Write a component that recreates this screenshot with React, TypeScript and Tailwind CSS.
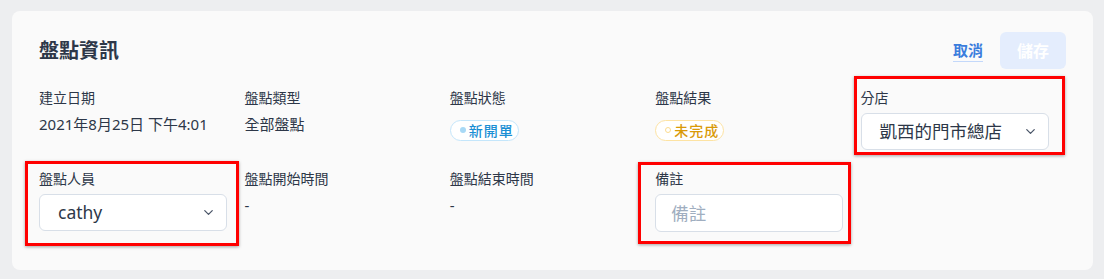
import { ChevronDown } from 'lucide-react';

const font = { fontFamily: '"Noto Sans", "Noto Sans CJK TC", sans-serif' };

const Label = ({ text }: { text: string }) => (
  <div className="text-[14px] leading-5 text-[#2d3748]">{text}</div>
);

const Info = ({ label, value }: { label: string; value: string }) => (
  <div>
    <Label text={label} />
    <div className="mt-[4px] text-[15px] leading-6 text-[#2d3748]">{value}</div>
  </div>
);

const Badge = ({ text, tone }: { text: string; tone: 'blue' | 'amber' }) => {
  const blue = tone === 'blue';
  return (
    <span
      className={
        blue
          ? 'inline-flex h-[21px] items-center gap-[3px] rounded-full border border-[#c4e6fb] bg-white pl-[9px] pr-[4px] text-[14px] font-medium tracking-[1px] text-[#1b8fd4]'
          : 'inline-flex h-[21px] items-center gap-[3px] rounded-full border border-[#fde3a3] bg-white pl-[9px] pr-[4px] text-[14px] font-medium tracking-[1px] text-[#d99a08]'
      }
    >
      {blue ? (
        <span className="h-[6px] w-[6px] rounded-full bg-[#a8d9f6]" />
      ) : (
        <span className="h-[6px] w-[6px] rounded-full border border-[#fcdc8f]" />
      )}
      {text}
    </span>
  );
};

const Select = ({ value }: { value: string }) => (
  <div className="flex h-[37px] w-[188px] items-center justify-between rounded-md border border-[#d8dfe8] bg-white pl-[18px] pr-[10px]">
    <span className="text-[17.5px] text-[#2d3748]">{value}</span>
    <ChevronDown size={15} strokeWidth={2} className="text-[#4a5568]" />
  </div>
);

// red annotation frames drawn over the fields
const Mark = ({ className }: { className: string }) => (
  <div
    className={
      'pointer-events-none absolute border-[3px] border-[#ff0000] shadow-[0_1px_3px_rgba(0,0,0,0.35)] ' + className
    }
  />
);

export default function App() {
  return (
    <div className="h-[279px] bg-[#edeef0] pl-[12px] pr-[11px] pt-[11px]" style={font}>
      <div className="rounded-lg bg-[#fafafa] px-[27px] pb-[38px] pt-[21px]">
        <div className="flex h-[37px] items-center justify-between">
          <h1 className="text-[20px] font-bold text-[#2d3748]">盤點資訊</h1>
          <div className="flex items-center gap-[17px]">
            <button className="border-b border-[#c3d8fa] pb-[1px] text-[15px] font-bold leading-5 text-[#3b7ddd]">
              取消
            </button>
            <button className="h-[37px] w-[66px] rounded-md bg-[#e4edfd] text-[16px] font-bold text-white">
              儲存
            </button>
          </div>
        </div>

        <div className="mt-[19px] grid grid-cols-5 gap-y-[19px]">
          <Info label="建立日期" value="2021年8月25日 下午4:01" />
          <Info label="盤點類型" value="全部盤點" />
          <div>
            <Label text="盤點狀態" />
            <div className="mt-[7px]">
              <Badge text="新開單" tone="blue" />
            </div>
          </div>
          <div>
            <Label text="盤點結果" />
            <div className="mt-[7px]">
              <Badge text="未完成" tone="amber" />
            </div>
          </div>
          <div className="relative">
            <Label text="分店" />
            <div className="mt-[5px]">
              <Select value="凱西的門市總店" />
            </div>
            <Mark className="-left-[7px] -top-[12px] h-[79px] w-[211px]" />
          </div>

          <div className="relative">
            <Label text="盤點人員" />
            <div className="mt-[5px]">
              <Select value="cathy" />
            </div>
            <Mark className="-left-[14px] -top-[8px] h-[85px] w-[214px]" />
          </div>
          <Info label="盤點開始時間" value="-" />
          <Info label="盤點結束時間" value="-" />
          <div className="relative">
            <Label text="備註" />
            <div className="mt-[5px]">
              <input
                placeholder="備註"
                className="h-[38px] w-[188px] rounded-md border border-[#d8dfe8] bg-white px-[15px] text-[17.5px] text-[#2d3748] outline-none placeholder:text-[#a0aec0]"
              />
            </div>
            <Mark className="-left-[17px] -top-[7px] h-[82px] w-[213px]" />
          </div>
        </div>
      </div>
    </div>
  );
}
